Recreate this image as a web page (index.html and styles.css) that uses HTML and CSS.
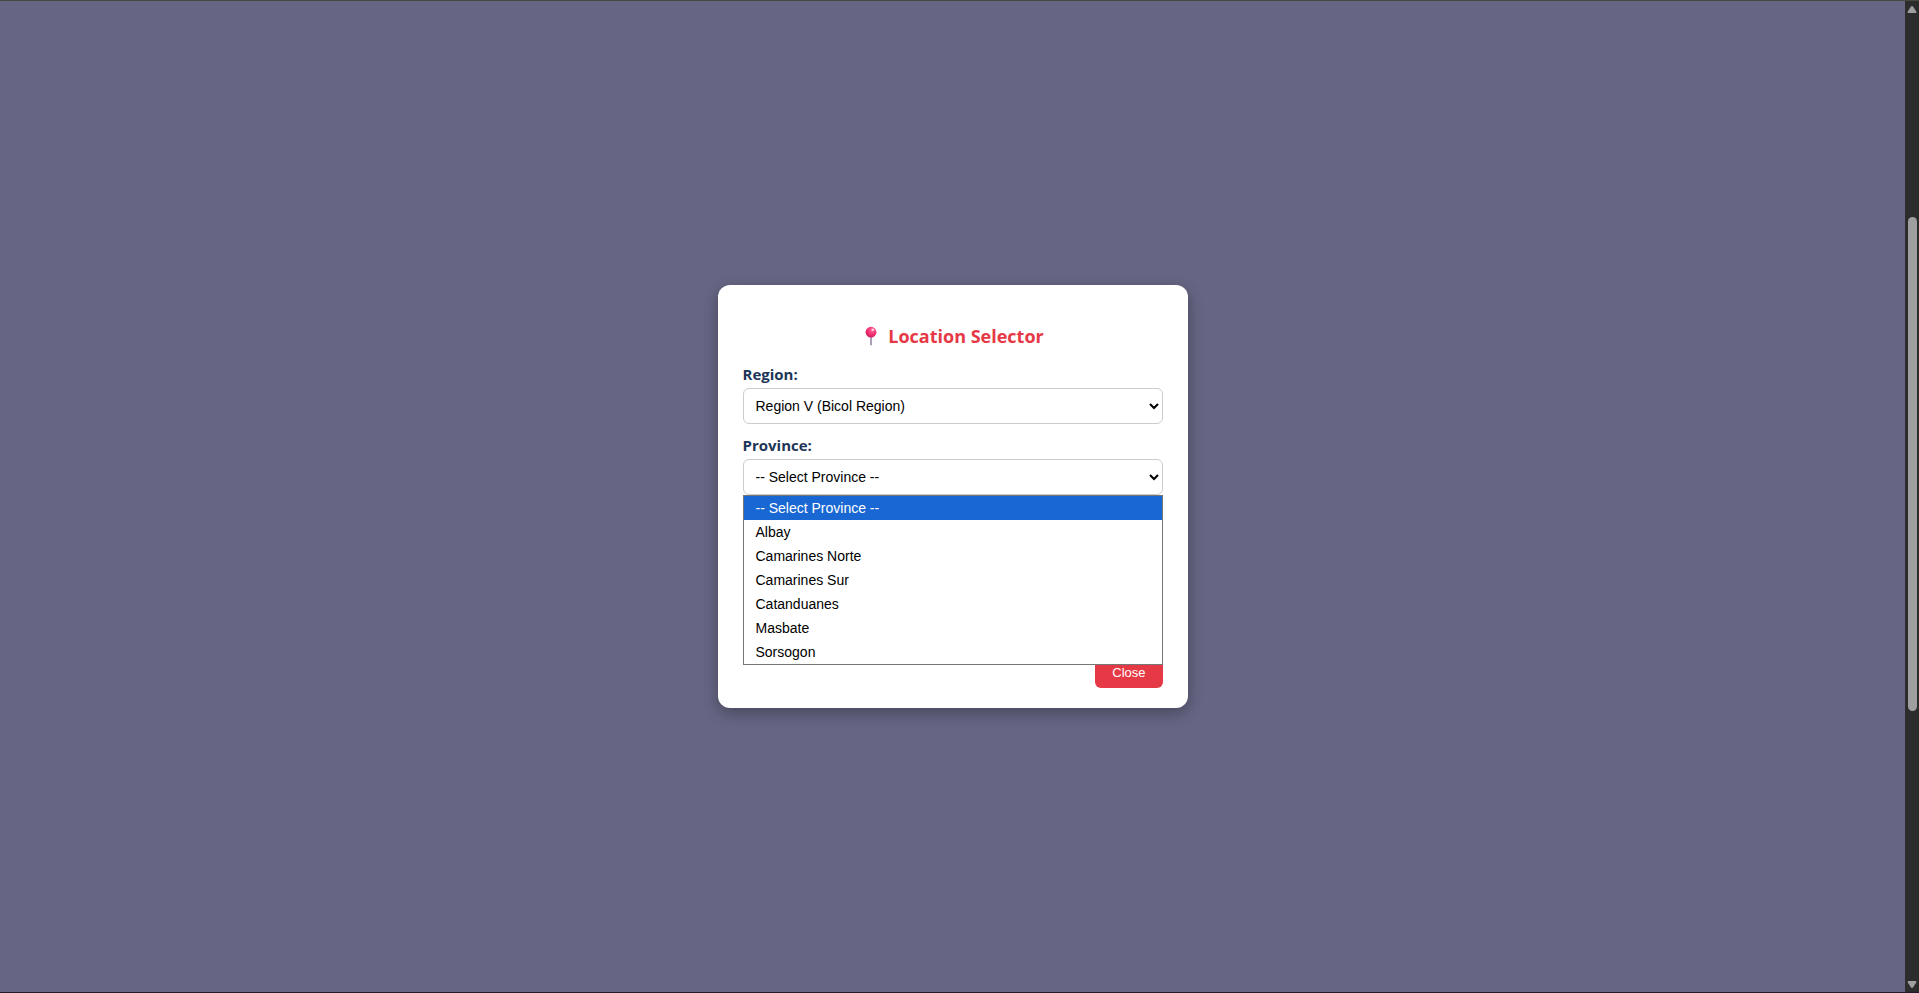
FILE: index.html
```html
<!DOCTYPE html>
<html lang="en">
<head>
<meta charset="utf-8">
<title>Location Selector</title>
<link rel="stylesheet" href="styles.css">
</head>
<body>
<main class="overlay">
  <section class="modal" role="dialog" aria-labelledby="modal-title">
    <h2 class="modal-title" id="modal-title">
      <svg class="pin" viewBox="0 0 20 20" aria-hidden="true">
        <defs>
          <radialGradient id="pin-head" cx="0.62" cy="0.3" r="0.7">
            <stop offset="0" stop-color="#ff9fc0"/>
            <stop offset="0.28" stop-color="#fa4c86"/>
            <stop offset="0.7" stop-color="#ee2a68"/>
            <stop offset="1" stop-color="#c81f63"/>
          </radialGradient>
        </defs>
        <rect x="9" y="10" width="2" height="9.5" rx="0.8" fill="#a9a0b8"/>
        <circle cx="10" cy="6.2" r="5.4" fill="url(#pin-head)"/>
        <ellipse cx="12" cy="3.8" rx="1.2" ry="1" fill="#ffe3ee"/>
      </svg>
      <span>Location Selector</span>
    </h2>
    <div class="field">
      <label class="label" for="region">Region:</label>
      <select class="select" id="region"><option>Region V (Bicol Region)</option></select>
    </div>
    <div class="field">
      <label class="label" for="province">Province:</label>
      <select class="select" id="province"><option>-- Select Province --</option></select>
      <ul class="options" role="listbox" aria-label="Province">
        <li class="option option-active" role="option" aria-selected="true">-- Select Province --</li>
        <li class="option" role="option">Albay</li>
        <li class="option" role="option">Camarines Norte</li>
        <li class="option" role="option">Camarines Sur</li>
        <li class="option" role="option">Catanduanes</li>
        <li class="option" role="option">Masbate</li>
        <li class="option" role="option">Sorsogon</li>
      </ul>
    </div>
    <div class="actions"><button class="close" type="button">Close</button></div>
  </section>
</main>
<div class="scrollbar" aria-hidden="true">
  <svg class="arrow" viewBox="0 0 10 8"><path d="M3.8 0.8Q5-0.6 6.2 0.8L9.2 5.6Q9.8 7 8.6 7H1.4Q0.2 7 0.8 5.6Z"/></svg>
  <div class="track"><div class="thumb"></div></div>
  <svg class="arrow" viewBox="0 0 10 8"><path d="M3.8 6.2Q5 7.6 6.2 6.2L9.2 1.4Q9.8 0 8.6 0H1.4Q0.2 0 0.8 1.4Z"/></svg>
</div>
</body>
</html>
```
FILE: styles.css
```css
* {
  box-sizing: border-box;
}

body {
  margin: 0;
  min-height: 100vh;
  display: flex;
  background: #666583;
  border-top: 1px solid #444a40;
  border-bottom: 1px solid #21182a;
  font-family: "Segoe UI", "Open Sans", "Noto Sans", sans-serif;
}

.overlay {
  flex: 1;
  display: flex;
  align-items: center;
  justify-content: center;
}

.modal {
  width: 470px;
  padding: 20px 25px;
  background: #fff;
  border-radius: 12px;
  box-shadow: 0 5px 15px rgba(0, 0, 0, 0.3);
}

.modal-title {
  display: flex;
  align-items: center;
  justify-content: center;
  gap: 7px;
  margin: 18px 0 14px;
  color: #e63946;
  font-size: 18px;
  font-weight: 700;
  line-height: 26px;
}

.pin {
  width: 20px;
  height: 20px;
}

.field {
  position: relative;
  margin-bottom: 10px;
}

.label {
  display: block;
  margin-bottom: 3px;
  color: #1d3557;
  font-size: 15px;
  font-weight: 700;
  line-height: 22px;
}

.select {
  display: block;
  width: 100%;
  height: 36px;
  padding: 8px;
  color: #000;
  background: #fff;
  border: 1px solid #ccc;
  border-radius: 6px;
  font: 14px "Liberation Sans", Arial, sans-serif;
}

.options {
  position: absolute;
  top: 100%;
  left: 0;
  right: 0;
  z-index: 1;
  margin: 0;
  padding: 0;
  list-style: none;
  background: #fff;
  border: 1px solid #767676;
  color: #000;
  font: 14px/24px "Liberation Sans", Arial, sans-serif;
}

.option {
  padding: 0 12px;
}

.option-active {
  background: #1967d2;
  color: #fff;
}

.actions {
  display: flex;
  justify-content: flex-end;
  margin-top: 162px;
}

.close {
  padding: 8px 17px;
  color: #fff;
  background: #e63946;
  border: 0;
  border-radius: 6px;
  font: 13px/15px "Liberation Sans", Arial, sans-serif;
}

.scrollbar {
  width: 14px;
  display: flex;
  flex-direction: column;
  align-items: center;
  gap: 4px;
  padding: 5px 0 3px;
  background: #2c2c2c;
}

.arrow {
  width: 10px;
  height: 8px;
  fill: #9f9f9f;
}

.track {
  flex: 1;
  width: 9px;
  padding-top: 20vh;
}

.thumb {
  height: 65%;
  background: #9f9f9f;
  border-radius: 5px;
}
```
